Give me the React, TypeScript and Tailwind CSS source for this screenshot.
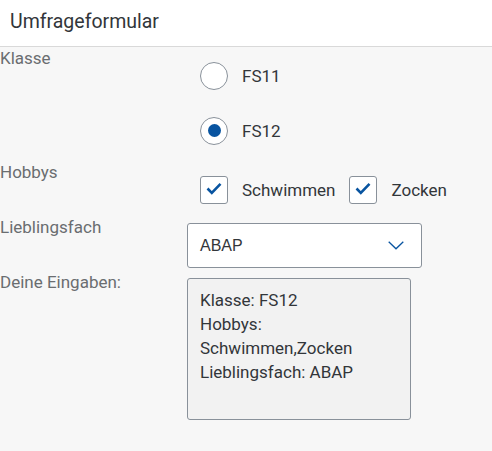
import React from 'react';

const labelFont = { fontFamily: 'Roboto, "Noto Sans", sans-serif' };

const Radio: React.FC<{ label: string; checked?: boolean }> = ({ label, checked = false }) => (
  <div className="flex h-[55px] items-center pl-[13px]">
    <div className="flex h-[28px] w-[28px] items-center justify-center rounded-full border border-[#89919a] bg-white">
      {checked && <div className="h-[13px] w-[13px] rounded-full bg-[#0854a0]" />}
    </div>
    <span className="ml-[14px] text-[17px] leading-[20px] text-[#32363a]">{label}</span>
  </div>
);

const Checkbox: React.FC<{ label: string }> = ({ label }) => (
  <div className="flex items-center">
    <div className="flex h-[28px] w-[28px] items-center justify-center rounded-[3px] border border-[#89919a] bg-white">
      <svg width="28" height="28" viewBox="0 0 28 28" className="-m-px">
        <polyline
          points="7.5,12.5 11.8,16.8 20.5,7.8"
          fill="none"
          stroke="#0854a0"
          strokeWidth="2.6"
          strokeLinecap="butt"
          strokeLinejoin="miter"
        />
      </svg>
    </div>
    <span className="ml-[14px] text-[17px] leading-[20px] text-[#32363a]">{label}</span>
  </div>
);

export default function App() {
  return (
    <div className="min-h-[451px] w-[492px] bg-[#f7f7f7]" style={labelFont}>
      {/* Header */}
      <header className="flex h-[47px] items-center border-b border-[#d9d9d9] bg-white pl-[10px] pb-[3px]">
        <h1 className="text-[19.5px] font-normal text-[#32363a]">Umfrageformular</h1>
      </header>

      <div className="grid grid-cols-[187px_1fr] pt-[1px]">
        {/* Klasse */}
        <div className="text-[17px] leading-[20px] text-[#6a6d70]">Klasse</div>
        <div className="flex flex-col">
          <Radio label="FS11" />
          <Radio label="FS12" checked />
        </div>

        {/* Hobbys */}
        <div className="mt-[4px] text-[17px] leading-[20px] text-[#6a6d70]">Hobbys</div>
        <div className="mt-[4px] flex h-[55px] items-center gap-[14px] pl-[13px]">
          <Checkbox label="Schwimmen" />
          <Checkbox label="Zocken" />
        </div>

        {/* Lieblingsfach */}
        <div className="text-[17px] leading-[20px] text-[#6a6d70]">Lieblingsfach</div>
        <div className="pt-[6px]">
          <div
            className="flex h-[45px] w-[235px] items-center justify-between rounded-[3px] border border-[#89919a] bg-white pl-[12px] pr-[17px] text-[16px] text-[#32363a]"
            style={{ fontFamily: '"Liberation Sans", Arial, sans-serif' }}
          >
            <span>ABAP</span>
            <svg width="16" height="9" viewBox="0 0 16 9">
              <polyline points="0.7,0.7 8,7.8 15.3,0.7" fill="none" stroke="#0854a0" strokeWidth="1.3" />
            </svg>
          </div>
        </div>

        {/* Deine Eingaben */}
        <div className="mt-[4px] text-[17px] leading-[20px] text-[#6a6d70]">Deine Eingaben:</div>
        <div className="mt-[4px] pt-[6px]">
          <div className="h-[142px] w-[224px] rounded-[3px] border border-[#89919a] bg-[#f2f2f2] pl-[12px] pt-[9px] text-[17px] leading-[24px] text-[#32363a]">
            <div>Klasse: FS12</div>
            <div>Hobbys:</div>
            <div>Schwimmen,Zocken</div>
            <div>Lieblingsfach: ABAP</div>
          </div>
        </div>
      </div>
    </div>
  );
}
